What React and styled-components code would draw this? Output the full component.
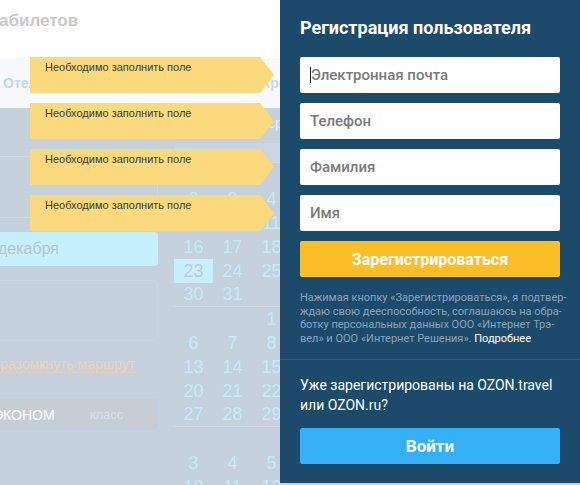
import React from "react";
import styled, { createGlobalStyle } from "styled-components";

const GlobalStyle = createGlobalStyle`
  html, body { margin: 0; padding: 0; background: #c5d1dc; }
  body { width: 580px; height: 485px; overflow: hidden; }
  * { box-sizing: border-box; }
`;

const Page = styled.div`
  position: relative;
  width: 580px;
  height: 485px;
  overflow: hidden;
  font-family: "Liberation Sans", Arial, sans-serif;
`;

const Backdrop = styled.div`
  display: flex;
  flex-direction: column;
  height: 100%;
`;

const Header = styled.header`
  flex: none;
  height: 58px;
  background: #ffffff;
  padding-top: 11px;
  font-size: 17px;
  line-height: 20px;
  font-weight: 700;
  color: #c9c9c9;
  white-space: nowrap;
  span { margin-left: -1px; }
`;

const TabBar = styled.nav`
  flex: none;
  height: 50px;
  background: #f7f9fc;
  display: flex;
  align-items: center;
  font-size: 14px;
  font-weight: 700;
  color: #c4d7ea;
  white-space: nowrap;
`;

const Tab = styled.span`
  margin-left: ${(p) => p.$offset}px;
`;

const Body = styled.main`
  flex: 1;
  min-height: 0;
  display: flex;
  align-items: flex-start;
  background: #c5d1dc;
`;

const FormCol = styled.div`
  width: 158px;
  flex: none;
  display: flex;
  flex-direction: column;
  & > * { flex: none; }
`;

const RouteBox = styled.div`
  margin-top: 48px;
  height: 62px;
  border: 1px solid #cfd9e3;
  border-left: none;
`;

const DateBox = styled.div`
  margin-top: 14px;
  height: 34px;
  background: #c4f1fd;
  border-radius: 0 4px 4px 0;
  display: flex;
  align-items: center;
  font-size: 16px;
  color: #bcc4cb;
  white-space: nowrap;
  span { margin-left: -2px; }
`;

const EmptyBox = styled.div`
  margin-top: 14px;
  height: 61px;
  border: 1px solid #cbd6e0;
  border-left: none;
  border-radius: 0 5px 5px 0;
`;

const RouteLink = styled.div`
  margin-top: 13px;
  height: 20px;
  line-height: 20px;
  font-size: 14px;
  color: #f0d2b4;
  white-space: nowrap;
  span {
    border-bottom: 1px dotted #f0d2b4;
  }
`;

const ClassBox = styled.div`
  margin-top: 25px;
  height: 31px;
  background: #c7cdd5;
  border-radius: 0 4px 4px 0;
  display: flex;
  align-items: center;
  white-space: nowrap;
`;

const ClassName = styled.span`
  margin-left: -7px;
  font-size: 14px;
  color: #ffffff;
`;

const ClassHint = styled.span`
  margin-left: 35px;
  font-size: 13px;
  color: #dbe0e6;
`;

const CalendarCol = styled.div`
  flex: 1;
  display: flex;
  flex-direction: column;
  & > * { flex: none; }
`;

const WeekHead = styled.div`
  height: 55px;
  border-bottom: 1px solid #d0dbe5;
  display: flex;
  flex-direction: column;
`;

const DayName = styled.div`
  height: 35px;
  padding: 7px 0 0 110px;
  font-size: 14px;
  line-height: 16px;
  color: #e4ecf3;
`;

const WeekBar = styled.div`
  margin-left: 16px;
  height: 19px;
  background: #c9d7e4;
  border-top-left-radius: 5px;
`;

const Month = styled.div`
  margin-left: 16px;
  border-bottom: ${(p) => (p.$last ? "none" : "1px solid #d0dbe5")};
`;

const Week = styled.div`
  display: grid;
  grid-template-columns: repeat(3, 39px);
  height: ${(p) => (p.$tight ? 23 : 24)}px;
`;

const Day = styled.div`
  display: flex;
  align-items: center;
  justify-content: center;
  font-size: 18px;
  color: ${(p) => (p.$selected ? "#c5cad2" : "#c1edf8")};
  background: ${(p) => (p.$selected ? "#c4f1fd" : "transparent")};
`;

const Modal = styled.section`
  position: absolute;
  top: 0;
  left: 280px;
  width: 300px;
  height: 483px;
  background: #1c4a6b;
  font-family: Roboto, "Noto Sans", sans-serif;
  display: flex;
  flex-direction: column;
`;

const FormArea = styled.div`
  padding: 17px 20px 13px;
`;

const Title = styled.h2`
  margin: 0 0 18px;
  font-size: 18px;
  line-height: 22px;
  font-weight: 700;
  color: #ffffff;
  white-space: nowrap;
`;

const Fields = styled.div`
  display: flex;
  flex-direction: column;
  gap: 10px;
`;

const Field = styled.div`
  position: relative;
  height: 36px;
  background: #ffffff;
  border-radius: 2px;
  display: flex;
  align-items: center;
  padding-left: 10px;
  font-size: 15px;
  font-weight: 500;
  color: #7a7a7a;
`;

const Caret = styled.span`
  width: 1px;
  height: 16px;
  background: #222;
`;

const Tooltip = styled.div`
  position: absolute;
  top: 0;
  right: calc(100% + 26px);
  width: 244px;
  height: 36px;
  background: #fbd97d;
  clip-path: polygon(0 0, 230px 0, 244px 50%, 230px 100%, 0 100%);
  padding: 4px 0 0 15px;
  font-family: "Liberation Sans", Arial, sans-serif;
  font-size: 11px;
  line-height: 13px;
  font-weight: 400;
  color: #3b3b3b;
  white-space: nowrap;
`;

const Button = styled.button`
  display: block;
  width: 100%;
  height: 36px;
  border: none;
  border-radius: 2px;
  background: ${(p) => p.$bg};
  color: #ffffff;
  font-family: Roboto, "Noto Sans", sans-serif;
  font-weight: 700;
  font-size: ${(p) => p.$size}px;
  padding: 0;
  cursor: pointer;
`;

const Disclaimer = styled.p`
  margin: 14px 0 0;
  font-size: 11px;
  line-height: 13.7px;
  color: #8ca3b7;
  white-space: nowrap;
  a {
    color: #ffffff;
    text-decoration: none;
  }
`;

const LoginArea = styled.div`
  border-top: 1px solid #2d5d82;
  padding: 15px 20px 0;
`;

const LoginText = styled.p`
  margin: 0 0 13px;
  font-size: 14px;
  line-height: 20px;
  color: #ffffff;
  white-space: nowrap;
`;

const months = [
  {
    weeks: [
      ["", "", ""],
      ["2", "3", "4"],
      ["9", "10", "11"],
      ["16", "17", "18"],
      ["23", "24", "25"],
      ["30", "31", ""],
    ],
  },
  {
    weeks: [
      ["", "", "1"],
      ["6", "7", "8"],
      ["13", "14", "15"],
      ["20", "21", "22"],
      ["27", "28", "29"],
    ],
  },
  {
    weeks: [
      ["", "", ""],
      ["3", "4", "5"],
      ["10", "11", "12"],
    ],
    last: true,
  },
];

const fields = ["Электронная почта", "Телефон", "Фамилия", "Имя"];

export default function App() {
  return (
    <Page>
      <GlobalStyle />
      <Backdrop>
        <Header>
          <span>абилетов</span>
        </Header>
        <TabBar>
          <Tab $offset={3}>Отели</Tab>
          <Tab $offset={214}>Аренда авто</Tab>
        </TabBar>
        <Body>
          <FormCol>
            <RouteBox />
            <DateBox>
              <span>декабря</span>
            </DateBox>
            <EmptyBox />
            <RouteLink>
              <span>разомкнуть маршрут</span>
            </RouteLink>
            <ClassBox>
              <ClassName>ЭКОНОМ</ClassName>
              <ClassHint>класс</ClassHint>
            </ClassBox>
          </FormCol>
          <CalendarCol>
            <WeekHead>
              <DayName>ср</DayName>
              <WeekBar />
            </WeekHead>
            {months.map((m, mi) => (
              <Month key={mi} $last={m.last}>
                {m.weeks.map((w, wi) => (
                  <Week key={wi} $tight={!m.last && wi === m.weeks.length - 1}>
                    {w.map((d, di) => (
                      <Day key={di} $selected={d === "23" && mi === 0}>
                        {d}
                      </Day>
                    ))}
                  </Week>
                ))}
              </Month>
            ))}
          </CalendarCol>
        </Body>
      </Backdrop>

      <Modal>
        <FormArea>
          <Title>Регистрация пользователя</Title>
          <Fields>
            {fields.map((f, i) => (
              <Field key={f}>
                <Tooltip>Необходимо заполнить поле</Tooltip>
                {i === 0 && <Caret />}
                {f}
              </Field>
            ))}
            <Button $bg="#fbbe26" $size={16}>
              Зарегистрироваться
            </Button>
          </Fields>
          <Disclaimer>
            Нажимая кнопку «Зарегистрироваться», я подтвер-
            <br />
            ждаю свою дееспособность, соглашаюсь на обра-
            <br />
            ботку персональных данных ООО «Интернет Трэ-
            <br />
            вел» и ООО «Интернет Решения». <a href="#">Подробнее</a>
          </Disclaimer>
        </FormArea>
        <LoginArea>
          <LoginText>
            Уже зарегистрированы на OZON.travel
            <br />
            или OZON.ru?
          </LoginText>
          <Button $bg="#34b0f7" $size={17}>
            Войти
          </Button>
        </LoginArea>
      </Modal>
    </Page>
  );
}
